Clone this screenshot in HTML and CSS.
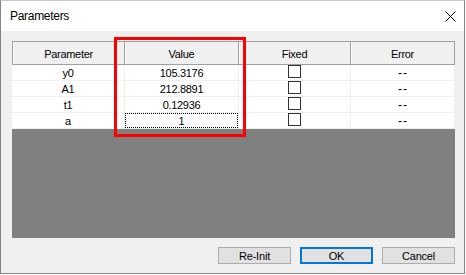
FILE: index.html
```html
<!DOCTYPE html>
<html>
<head>
<meta charset="utf-8">
<link rel="stylesheet" href="styles.css">
</head>
<body>
<div class="dialog">
  <div class="titlebar">
    <span class="title">Parameters</span>
    <svg class="close" width="11" height="11" viewBox="0 0 11 11"><path d="M0.5 0.5 L10.5 10.5 M10.5 0.5 L0.5 10.5" stroke="#000" stroke-width="1" fill="none"/></svg>
  </div>
  <div class="content">
    <div class="grid">
      <div class="row head">
        <div class="hcell">Parameter</div>
        <div class="hcell">Value</div>
        <div class="hcell">Fixed</div>
        <div class="hcell">Error</div>
      </div>
      <div class="row">
        <div class="cell">y0</div>
        <div class="cell">105.3176</div>
        <div class="cell"><span class="check"></span></div>
        <div class="cell err">--</div>
      </div>
      <div class="row">
        <div class="cell">A1</div>
        <div class="cell">212.8891</div>
        <div class="cell"><span class="check"></span></div>
        <div class="cell err">--</div>
      </div>
      <div class="row">
        <div class="cell">t1</div>
        <div class="cell">0.12936</div>
        <div class="cell"><span class="check"></span></div>
        <div class="cell err">--</div>
      </div>
      <div class="row">
        <div class="cell">a</div>
        <div class="cell"><span class="focus">1</span></div>
        <div class="cell"><span class="check"></span></div>
        <div class="cell err">--</div>
      </div>
    </div>
    <div class="buttons">
      <button class="btn">Re-Init</button>
      <button class="btn default">OK</button>
      <button class="btn">Cancel</button>
    </div>
  </div>
  <div class="highlight"></div>
</div>
</body>
</html>
```

FILE: styles.css
```css
* { box-sizing: border-box; }
html, body { margin: 0; padding: 0; background: #ffffff; }
body { width: 466px; height: 275px; overflow: hidden; font-family: "Liberation Sans", Arial, sans-serif; }

.dialog {
  position: relative;
  width: 465px;
  height: 274px;
  border: 1px solid #858585;
  border-top-color: #c8c8c8;
  background: #f0f0f0;
  display: flex;
  flex-direction: column;
}

.titlebar {
  height: 30px;
  background: #ffffff;
  display: flex;
  align-items: center;
  justify-content: space-between;
  padding: 0 8px 0 9px;
}
.title { font-size: 12px; color: #000; letter-spacing: -0.3px; }
.close { display: block; }

.content {
  flex: 1;
  padding: 10px 9px 9px 11px;
  display: flex;
  flex-direction: column;
}

.grid {
  width: 443px;
  height: 197px;
  background: #808080;
  display: flex;
  flex-direction: column;
}

.row {
  display: grid;
  grid-template-columns: 113px 114px 112px 104px;
}
.row.head { border-top: 1px solid #a0a0a0; }

.hcell, .cell {
  font-size: 11px;
  color: #000;
  letter-spacing: -0.3px;
  display: flex;
  align-items: center;
  justify-content: center;
}
.hcell {
  height: 23px;
  background: #f0f0f0;
  border-right: 1px solid #a0a0a0;
  border-bottom: 1px solid #a0a0a0;
  box-shadow: inset 1px 0 0 #ffffff;
  padding-top: 1px;
}
.hcell:first-child { border-left: 1px solid #a0a0a0; }

.cell {
  height: 16px;
  background: #ffffff;
  border-right: 1px solid #f0f0f0;
  border-bottom: 1px solid #f0f0f0;
}
.cell.err { font-size: 12px; letter-spacing: 1px; padding-left: 1px; }

.check {
  width: 13px;
  height: 13px;
  border: 1px solid #333333;
  background: #fff;
  margin-top: -2px;
}

.focus {
  width: 100%;
  height: 100%;
  border: 1px dotted #000;
  display: flex;
  align-items: center;
  justify-content: center;
}

.buttons {
  margin-top: 9px;
  display: flex;
  justify-content: flex-end;
  gap: 9px;
}
.btn {
  width: 73px;
  height: 17px;
  padding: 0;
  margin: 0;
  background: #e1e1e1;
  border: 1px solid #adadad;
  font-family: "Liberation Sans", Arial, sans-serif;
  font-size: 11px;
  letter-spacing: -0.2px;
  color: #000;
}
.btn.default { border: 2px solid #0078d7; }

.highlight {
  position: absolute;
  left: 113px;
  top: 36px;
  width: 132px;
  height: 100px;
  border: 3px solid #ff0000;
}
```
